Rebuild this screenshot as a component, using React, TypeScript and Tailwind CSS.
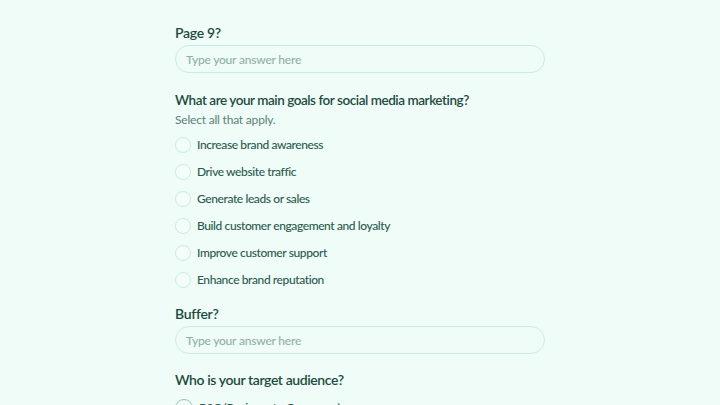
import React from "react";

const goals = [
  "Increase brand awareness",
  "Drive website traffic",
  "Generate leads or sales",
  "Build customer engagement and loyalty",
  "Improve customer support",
  "Enhance brand reputation",
];

const TextQuestion = ({ label }: { label: string }) => (
  <div className="flex flex-col">
    <p className="text-[14px] font-semibold leading-[20px] tracking-[-0.3px] text-[#1d4b3e]">{label}</p>
    <input
      placeholder="Type your answer here"
      className="mt-[2px] h-[28px] w-full rounded-full border border-[#c6ede1] bg-transparent px-[10px] text-[12px] font-medium tracking-[-0.2px] text-[#1d4b3e] outline-none placeholder:text-[#8fb0a6]"
    />
  </div>
);

export default function App() {
  return (
    <div
      className="h-[405px] w-[720px] overflow-hidden bg-[#effcf8]"
      style={{ fontFamily: "Lato, 'Noto Sans', sans-serif" }}
    >
      <div className="mx-auto flex w-[370px] flex-col pt-[23px]">
        <TextQuestion label="Page 9?" />

        <div className="mt-[17px] flex flex-col">
          <p className="text-[13.5px] font-semibold leading-[20px] tracking-[-0.45px] text-[#1d4b3e]">
            What are your main goals for social media marketing?
          </p>
          <p className="mt-[1px] text-[12px] leading-[18px] tracking-[-0.2px] text-[#5e7f75]">Select all that apply.</p>
          <div className="mt-[8px] flex flex-col gap-[11px]">
            {goals.map((g) => (
              <label key={g} className="flex h-[16px] items-center gap-[6px]">
                <span className="h-[16px] w-[16px] shrink-0 rounded-full border border-[#c6ede1] bg-[#f4fdfa]" />
                <span className="text-[12px] font-medium tracking-[-0.4px] text-[#2c5a4d]">{g}</span>
              </label>
            ))}
          </div>
        </div>

        <div className="mt-[16px]">
          <TextQuestion label="Buffer?" />
        </div>

        <div className="mt-[16px] flex flex-col">
          <p className="text-[14px] font-semibold leading-[20px] tracking-[-0.4px] text-[#1d4b3e]">Who is your target audience?</p>
          <label className="mt-[9px] flex h-[18px] items-center gap-[6px]">
            <span className="flex h-[18px] w-[18px] shrink-0 items-center justify-center rounded-full border border-[#9fbfb5] text-[10px] font-semibold text-[#1d4b3e]">
              A
            </span>
            <span className="text-[12px] font-medium tracking-[-0.3px] text-[#2c5a4d]">B2C (Business to Consumer)</span>
          </label>
        </div>
      </div>
    </div>
  );
}
